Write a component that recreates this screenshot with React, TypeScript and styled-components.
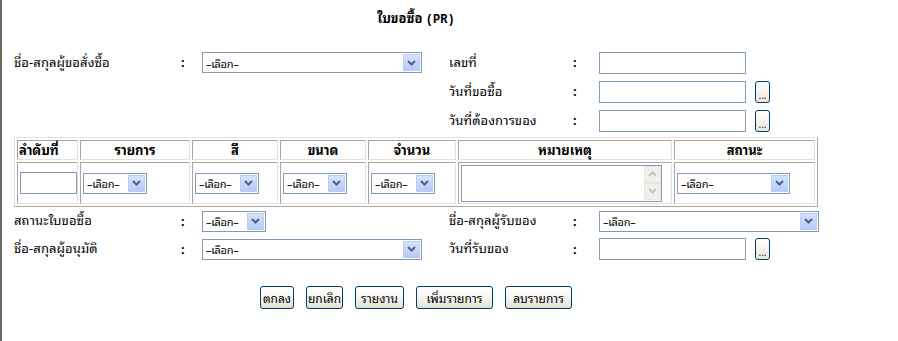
import React from 'react'
import styled, { createGlobalStyle } from 'styled-components'

const GlobalStyle = createGlobalStyle`
  html, body {
    margin: 0;
    padding: 0;
    background: #ffffff;
  }
  body {
    font-family: Tahoma, 'Noto Sans Thai Looped', Loma, Garuda, 'Noto Sans Thai', 'Noto Sans', 'DejaVu Sans', sans-serif;
    font-size: 13px;
    color: #000000;
  }
`

const Page = styled.div`
  min-height: 341px;
  border-left: 2px solid #6e6e66;
  box-sizing: border-box;
`

const Content = styled.div`
  width: 804px;
  margin-left: 12px;
`

const Title = styled.div`
  height: 48px;
  padding-top: 9px;
  box-sizing: border-box;
  text-align: center;
  font-weight: bold;
  font-size: 13px;
  line-height: 18px;
`

const Latin = styled.span`
  font-family: 'Liberation Mono', monospace;
  font-weight: bold;
  font-size: 12px;
`

const FormGrid = styled.div<{ $rowHeight: number }>`
  display: grid;
  grid-template-columns: 167px 21px 247px 124px 26px 1fr;
  grid-auto-rows: ${({ $rowHeight }) => $rowHeight}px;
  align-items: center;
`

const Label = styled.div`
  white-space: nowrap;
  letter-spacing: 0.1px;
  line-height: 16px;
  margin-top: -2px;
`

const Colon = styled.div`
  font-weight: bold;
  margin-top: -2px;
`

const Field = styled.div`
  display: flex;
  align-items: center;
  gap: 9px;
`

const Empty = styled.div``

const SelectBox = styled.div<{ $width: number }>`
  width: ${({ $width }) => $width}px;
  height: 21px;
  box-sizing: border-box;
  border: 1px solid #7f9db9;
  background: #ffffff;
  display: flex;
  align-items: center;
  justify-content: space-between;
  padding: 1px;
  font-size: 11px;
  white-space: nowrap;
  overflow: hidden;
`

const SelectText = styled.span`
  padding-left: 2px;
  letter-spacing: -0.3px;
`

const ArrowBox = styled.div`
  flex: none;
  width: 17px;
  height: 17px;
  box-sizing: border-box;
  border: 1px solid #b9cdf5;
  background: linear-gradient(#d6e2fd, #b7cbf8);
  display: flex;
  align-items: center;
  justify-content: center;
`

const TextInput = styled.div<{ $width: number }>`
  width: ${({ $width }) => $width}px;
  height: 22px;
  box-sizing: border-box;
  border: 1px solid #7f9db9;
  background: #ffffff;
`

const DotButton = styled.div`
  width: 15px;
  height: 22px;
  box-sizing: border-box;
  border: 1px solid #003c74;
  border-radius: 3px;
  background: linear-gradient(#ffffff, #ece9d8);
  display: flex;
  align-items: flex-end;
  justify-content: center;
  font-size: 10px;
  line-height: 14px;
  color: #222222;
`

const ItemTable = styled.table`
  width: 804px;
  margin-top: 2px;
  table-layout: fixed;
  border-collapse: separate;
  border-spacing: 2px;
  border: 1px solid;
  border-color: #e4e2d8 #a9a79c #a9a79c #e4e2d8;
`

const HeadCell = styled.th<{ $align?: string }>`
  height: 20px;
  padding: 0 1px;
  box-sizing: border-box;
  border: 1px solid;
  border-color: #a9a79c #e4e2d8 #e4e2d8 #a9a79c;
  font-weight: bold;
  font-size: 13px;
  line-height: 16px;
  text-align: ${({ $align }) => $align || 'center'};
  white-space: nowrap;
`

const BodyCell = styled.td`
  height: 42px;
  padding: 0 2px;
  box-sizing: border-box;
  border: 1px solid;
  border-color: #a9a79c #e4e2d8 #e4e2d8 #a9a79c;
  vertical-align: middle;
  line-height: 0;
`

const Memo = styled.div`
  width: 201px;
  height: 37px;
  box-sizing: border-box;
  border: 1px solid #7f9db9;
  background: #ffffff;
  display: flex;
  justify-content: flex-end;
`

const ScrollTrack = styled.div`
  width: 17px;
  display: flex;
  flex-direction: column;
  background: #f7f7f3;
`

const ScrollBtn = styled.div`
  height: 17px;
  box-sizing: border-box;
  border: 1px solid #e6e5df;
  background: #f0efe9;
  display: flex;
  align-items: center;
  justify-content: center;
`

const ButtonRow = styled.div`
  display: flex;
  justify-content: center;
  gap: 12px;
  margin-top: 23px;
`

const ActionButton = styled.button<{ $width: number }>`
  width: ${({ $width }) => $width}px;
  height: 23px;
  padding: 0;
  box-sizing: border-box;
  border: 1px solid #003c74;
  border-radius: 3px;
  background: linear-gradient(#ffffff, #f3f2ec 60%, #e2dfd3);
  font-family: inherit;
  font-size: 12px;
  color: #000000;
`

function Chevron({ up = false, color = '#4d6185' }: { up?: boolean; color?: string }) {
  return (
    <svg width="9" height="6" viewBox="0 0 9 6">
      <path
        d={up ? 'M1 5 L4.5 1.5 L8 5' : 'M1 1 L4.5 4.5 L8 1'}
        fill="none"
        stroke={color}
        strokeWidth="2"
      />
    </svg>
  )
}

function Select({ width }: { width: number }) {
  return (
    <SelectBox $width={width}>
      <SelectText>–เลือก–</SelectText>
      <ArrowBox>
        <Chevron />
      </ArrowBox>
    </SelectBox>
  )
}

function DateField() {
  return (
    <Field>
      <TextInput $width={147} />
      <DotButton>...</DotButton>
    </Field>
  )
}

const columns = [
  { title: 'ลำดับที่', width: 61, align: 'left' },
  { title: 'รายการ', width: 110 },
  { title: 'สี', width: 86 },
  { title: 'ขนาด', width: 86 },
  { title: 'จำนวน', width: 88 },
  { title: 'หมายเหตุ', width: 214 },
  { title: 'สถานะ', width: 141 },
]

const actions = [
  { label: 'ตกลง', width: 34 },
  { label: 'ยกเลิก', width: 37 },
  { label: 'รายงาน', width: 49 },
  { label: 'เพิ่มรายการ', width: 77 },
  { label: 'ลบรายการ', width: 67 },
]

export default function App() {
  return (
    <Page>
      <GlobalStyle />
      <Content>
        <Title>
          ใบขอซื้อ <Latin>(PR)</Latin>
        </Title>

        <FormGrid $rowHeight={29}>
          <Label>ชื่อ-สกุลผู้ขอสั่งซื้อ</Label>
          <Colon>:</Colon>
          <Field>
            <Select width={220} />
          </Field>
          <Label>เลขที่</Label>
          <Colon>:</Colon>
          <Field>
            <TextInput $width={147} />
          </Field>

          <Empty />
          <Empty />
          <Empty />
          <Label>วันที่ขอซื้อ</Label>
          <Colon>:</Colon>
          <DateField />

          <Empty />
          <Empty />
          <Empty />
          <Label>วันที่ต้องการของ</Label>
          <Colon>:</Colon>
          <DateField />
        </FormGrid>

        <ItemTable>
          <colgroup>
            {columns.map((c) => (
              <col key={c.title} style={{ width: c.width }} />
            ))}
          </colgroup>
          <thead>
            <tr>
              {columns.map((c) => (
                <HeadCell key={c.title} $align={c.align}>
                  {c.title}
                </HeadCell>
              ))}
            </tr>
          </thead>
          <tbody>
            <tr>
              <BodyCell>
                <TextInput $width={57} />
              </BodyCell>
              <BodyCell>
                <Select width={64} />
              </BodyCell>
              <BodyCell>
                <Select width={64} />
              </BodyCell>
              <BodyCell>
                <Select width={64} />
              </BodyCell>
              <BodyCell>
                <Select width={64} />
              </BodyCell>
              <BodyCell>
                <Memo>
                  <ScrollTrack>
                    <ScrollBtn>
                      <Chevron up color="#c4c3bd" />
                    </ScrollBtn>
                    <ScrollBtn>
                      <Chevron color="#c4c3bd" />
                    </ScrollBtn>
                  </ScrollTrack>
                </Memo>
              </BodyCell>
              <BodyCell>
                <Select width={113} />
              </BodyCell>
            </tr>
          </tbody>
        </ItemTable>

        <FormGrid $rowHeight={28}>
          <Label>สถานะใบขอซื้อ</Label>
          <Colon>:</Colon>
          <Field>
            <Select width={64} />
          </Field>
          <Label>ชื่อ-สกุลผู้รับของ</Label>
          <Colon>:</Colon>
          <Field>
            <Select width={220} />
          </Field>

          <Label>ชื่อ-สกุลผู้อนุมัติ</Label>
          <Colon>:</Colon>
          <Field>
            <Select width={220} />
          </Field>
          <Label>วันที่รับของ</Label>
          <Colon>:</Colon>
          <DateField />
        </FormGrid>

        <ButtonRow>
          {actions.map((a) => (
            <ActionButton key={a.label} $width={a.width}>
              {a.label}
            </ActionButton>
          ))}
        </ButtonRow>
      </Content>
    </Page>
  )
}
